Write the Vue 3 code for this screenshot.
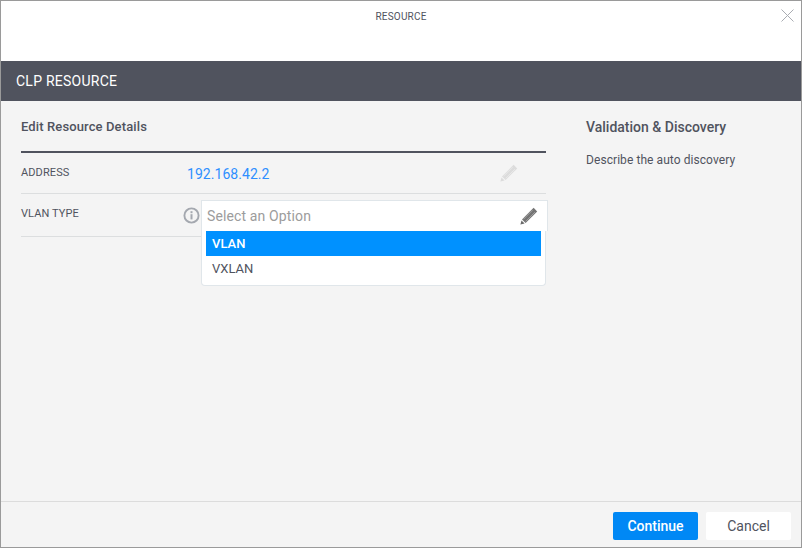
<template>
  <div class="dialog">
    <header class="top">
      <span class="top-title">RESOURCE</span>
      <svg class="close" viewBox="0 0 13 13" width="13" height="13">
        <path d="M0.5 0.5L12.5 12.5M12.5 0.5L0.5 12.5" stroke="#a9acb2" stroke-width="1" fill="none" />
      </svg>
    </header>
    <div class="bar">CLP RESOURCE</div>
    <main class="body">
      <section class="details">
        <h2 class="details-title">Edit Resource Details</h2>
        <div class="row row-address">
          <span class="row-label">ADDRESS</span>
          <span class="address">{{ address }}</span>
          <svg class="pencil pencil-off" viewBox="0 0 18 18" width="18" height="18">
            <path :d="pencilBody" fill="#dcdcdc" />
            <path :d="pencilGroove" stroke="#ebebeb" stroke-width="0.8" fill="none" />
            <path :d="pencilTip" fill="#dcdcdc" />
          </svg>
        </div>
        <div class="row row-vlan">
          <span class="row-label">VLAN TYPE</span>
          <svg class="info" viewBox="0 0 17 17" width="17" height="17">
            <circle cx="8.5" cy="8.5" r="7.1" fill="none" stroke="#a4a8af" stroke-width="1.9" />
            <rect x="7.5" y="7.2" width="2" height="5.2" fill="#a4a8af" />
            <rect x="7.5" y="4.2" width="2" height="2" fill="#a4a8af" />
          </svg>
          <div class="select">
            <div class="select-input">
              <span class="select-holder">Select an Option</span>
              <svg class="pencil" viewBox="0 0 18 18" width="18" height="18">
                <path :d="pencilBody" fill="#747474" />
                <path :d="pencilGroove" stroke="#a8a8a8" stroke-width="0.8" fill="none" />
                <path :d="pencilTip" fill="#6a6a6a" />
              </svg>
            </div>
            <ul class="options">
              <li
                v-for="opt in options"
                :key="opt"
                class="option"
                :class="{ active: opt === selected }">
                {{ opt }}
              </li>
            </ul>
          </div>
        </div>
      </section>
      <aside class="side">
        <h2 class="side-title">Validation &amp; Discovery</h2>
        <p class="side-text">Describe the auto discovery</p>
      </aside>
    </main>
    <footer class="foot">
      <button class="btn btn-primary">Continue</button>
      <button class="btn">Cancel</button>
    </footer>
  </div>
</template>

<script setup>
import { ref } from 'vue';

const address = '192.168.42.2';
const options = ['VLAN', 'VXLAN'];
const selected = ref('VLAN');

const pencilBody = 'M13.6 0.8L17.2 4.4L5.6 16L2 12.4Z';
const pencilGroove = 'M12.6 3.2L3.6 12.2M14.9 5.1L5.6 14.4';
const pencilTip = 'M1.5 13.4L4.6 16.5L0.4 17.6Z';
</script>

<style>
html,
body {
  margin: 0;
  background: #fff;
}
</style>

<style scoped>
.dialog {
  box-sizing: border-box;
  width: 802px;
  height: 548px;
  display: flex;
  flex-direction: column;
  border: 1px solid #9a9a9a;
  font-family: Roboto, "Liberation Sans", sans-serif;
  color: #50535e;
  background: #f4f4f4;
}
.top {
  position: relative;
  height: 60px;
  flex: none;
  background: #fff;
  text-align: center;
}
.top-title {
  display: block;
  padding-top: 9px;
  font-size: 10px;
  line-height: 14px;
  letter-spacing: 0.2px;
  color: #50535e;
}
.close {
  position: absolute;
  top: 8px;
  right: 7px;
}
.bar {
  height: 40px;
  flex: none;
  box-sizing: border-box;
  padding-left: 15px;
  background: #50535e;
  color: #fff;
  font-size: 14px;
  line-height: 40px;
  letter-spacing: 0.25px;
}
.body {
  flex: 1;
  display: flex;
  padding-left: 20px;
}
.details {
  width: 525px;
  flex: none;
}
.details-title,
.side-title {
  margin: 0;
  font-size: 14px;
  font-weight: 500;
  line-height: 20px;
  color: #50535e;
}
.details-title {
  padding: 16px 0 14px;
  border-bottom: 2px solid #50535e;
  font-size: 13px;
  letter-spacing: 0.12px;
}
.row {
  display: flex;
  position: relative;
  border-bottom: 1px solid #dcdedf;
  box-sizing: border-box;
}
.row-address {
  height: 41px;
  padding-top: 13px;
}
.row-vlan {
  height: 43px;
  padding-top: 13px;
}
.row-label {
  width: 166px;
  flex: none;
  font-size: 11px;
  line-height: 14px;
  letter-spacing: 0.1px;
}
.address {
  font-size: 14px;
  line-height: 16px;
  letter-spacing: 0.05px;
  color: #2e8fff;
}
.pencil-off {
  position: absolute;
  top: 11px;
  left: 479px;
}
.info {
  position: absolute;
  top: 13px;
  left: 162px;
}
.select {
  position: absolute;
  top: 6px;
  left: 180px;
  width: 345px;
}
.select-input {
  box-sizing: border-box;
  width: 347px;
  height: 31px;
  display: flex;
  align-items: center;
  justify-content: space-between;
  padding: 0 9px 1px 5px;
  background: #fff;
  border: 1px solid #e0e6ea;
  border-bottom: 0;
  font-size: 14px;
  letter-spacing: 0.13px;
}
.select-holder {
  color: #9c9c9c;
}
.options {
  margin: 0;
  padding: 0 4px 4px;
  list-style: none;
  background: #fff;
  border: 1px solid #e0e6ea;
  border-top: 0;
  border-radius: 0 0 4px 4px;
  box-sizing: border-box;
  height: 55px;
}
.option {
  height: 25px;
  padding-left: 6px;
  font-size: 13px;
  line-height: 25px;
}
.option.active {
  background: #0091ff;
  color: #fff;
  font-weight: 500;
}
.side {
  padding: 16px 0 0 40px;
}
.side-text {
  margin: 15px 0 0;
  font-size: 12px;
  line-height: 16px;
  letter-spacing: 0.07px;
}
.foot {
  height: 46px;
  flex: none;
  box-sizing: border-box;
  display: flex;
  justify-content: flex-end;
  gap: 8px;
  padding: 10px 10px 0 0;
  border-top: 1px solid #dcdcdc;
}
.btn {
  width: 85px;
  height: 28px;
  padding: 0;
  border: 0;
  border-radius: 2px;
  background: #fff;
  color: #50535e;
  font-family: inherit;
  font-size: 14px;
}
.btn-primary {
  background: #0088f5;
  color: #fff;
  font-weight: 500;
}
</style>
